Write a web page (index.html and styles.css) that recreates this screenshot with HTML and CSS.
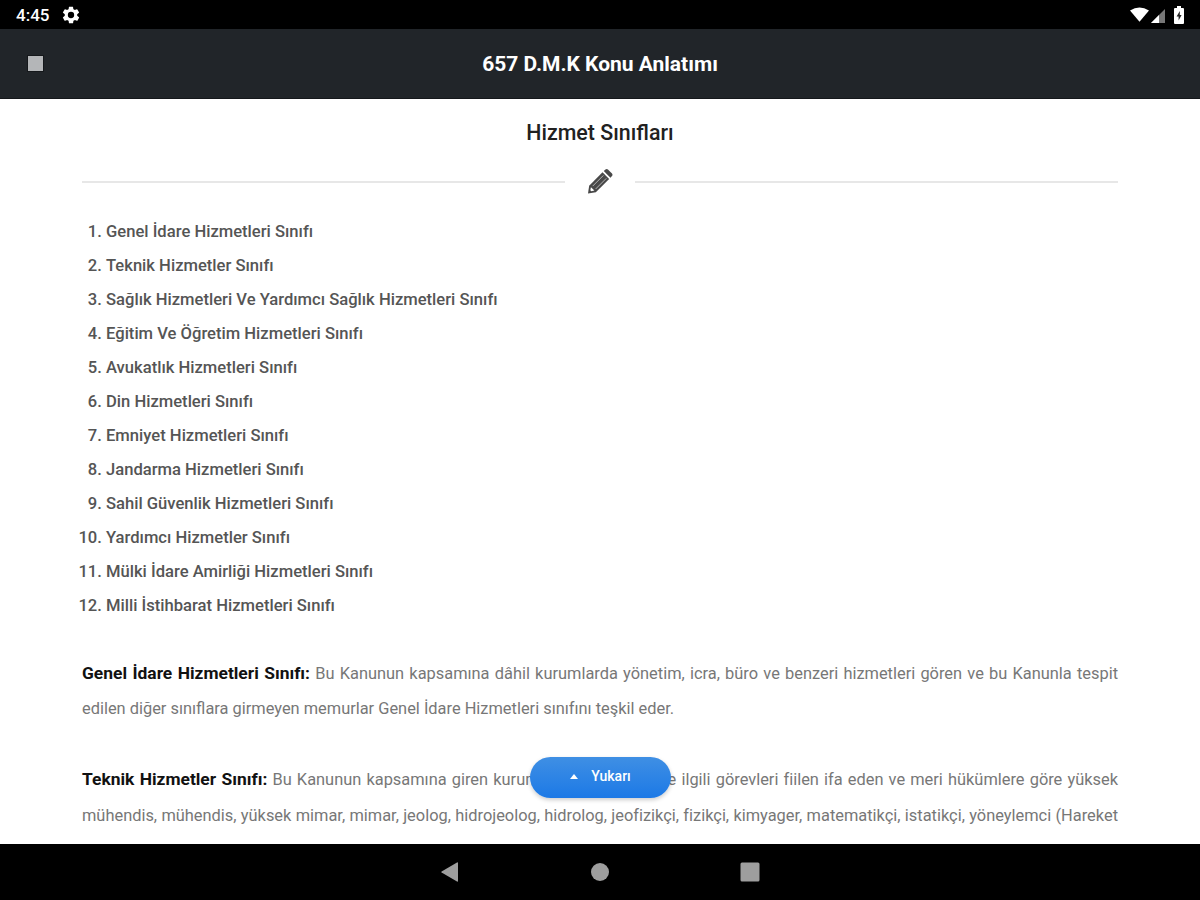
FILE: index.html
```html
<!DOCTYPE html>
<html lang="tr">
<head>
    <meta charset="UTF-8">
    <meta name="viewport" content="width=device-width, initial-scale=1.0">
    <title>657 D.M.K Konu Anlatımı</title>
    <link rel="stylesheet" href="styles.css">
</head>
<body>
    <div class="screen">
        <!-- Status bar -->
        <div class="status-bar">
            <div class="status-left">
                <span class="clock">4:45</span>
                <svg class="gear" viewBox="0 0 24 24"><path fill="#fff" fill-rule="evenodd" d="M19.4 13c.04-.3.06-.65.06-1s-.02-.7-.06-1l2.1-1.65a.5.5 0 0 0 .12-.64l-2-3.46a.5.5 0 0 0-.6-.22l-2.5 1a7.3 7.3 0 0 0-1.7-.98l-.38-2.65A.5.5 0 0 0 14 2h-4a.5.5 0 0 0-.5.42l-.37 2.65c-.6.24-1.17.58-1.7.98l-2.48-1a.5.5 0 0 0-.6.22l-2 3.46a.5.5 0 0 0 .12.64L4.57 11a8 8 0 0 0 0 2l-2.1 1.65a.5.5 0 0 0-.12.64l2 3.46c.12.22.38.3.6.22l2.5-1c.52.4 1.08.74 1.7.98l.37 2.65c.04.24.25.4.5.4h4c.24 0 .45-.16.5-.4l.36-2.65c.62-.24 1.18-.58 1.7-.98l2.5 1c.22.08.48 0 .6-.22l2-3.46a.5.5 0 0 0-.12-.64zM12 15.8a3.8 3.8 0 1 1 0-7.6 3.8 3.8 0 0 1 0 7.6z"/></svg>
            </div>
            <div class="status-right">
                <svg class="wifi" viewBox="0 0 20 15"><path fill="#fff" d="M0 3.2Q10-3.2 20 3.2L10 15z"/></svg>
                <svg class="signal" viewBox="0 0 14 14"><path fill="#777" d="M14 0v14H0z"/><path fill="#fff" d="M8 6v8H0z"/></svg>
                <svg class="battery" viewBox="0 0 10 18"><path fill="#fff" d="M3 0h4v2h2q1 0 1 1v14q0 1-1 1H1q-1 0-1-1V3q0-1 1-1h2z"/><path fill="#222" d="M5.8 5L2.6 10.6h2v4L7.6 9H5.8z"/></svg>
            </div>
        </div>

        <!-- Navbar -->
        <div class="navbar">
            <span class="menu-btn"></span>
            <h1>657 D.M.K Konu Anlatımı</h1>
        </div>

        <div class="content">
            <h2>Hizmet Sınıfları</h2>

            <div class="divider">
                <svg class="pencil" viewBox="0 0 24 24">
                    <path fill="#484848" d="M.5 23.5L1.6 16L14.4 3.2 20.8 9.6 8 22.4z"/>
                    <path fill="#484848" d="M15.6 2L17.2.5q1.2-1 2.4 0l3.9 3.9q1 1.2 0 2.4L22 8.4z"/>
                    <path fill="none" stroke="#bbb" stroke-width=".9" d="M5 16.4L15.2 6.2M7.8 19.2L18 9"/>
                    <path fill="#fff" d="M3.3 17.4L6.6 20.7 3.7 21.3 2.7 20.3z"/>
                </svg>
            </div>

            <ol class="class-list">
                <li>Genel İdare Hizmetleri Sınıfı</li>
                <li>Teknik Hizmetler Sınıfı</li>
                <li>Sağlık Hizmetleri Ve Yardımcı Sağlık Hizmetleri Sınıfı</li>
                <li>Eğitim Ve Öğretim Hizmetleri Sınıfı</li>
                <li>Avukatlık Hizmetleri Sınıfı</li>
                <li>Din Hizmetleri Sınıfı</li>
                <li>Emniyet Hizmetleri Sınıfı</li>
                <li>Jandarma Hizmetleri Sınıfı</li>
                <li>Sahil Güvenlik Hizmetleri Sınıfı</li>
                <li>Yardımcı Hizmetler Sınıfı</li>
                <li>Mülki İdare Amirliği Hizmetleri Sınıfı</li>
                <li>Milli İstihbarat Hizmetleri Sınıfı</li>
            </ol>

            <p><b>Genel İdare Hizmetleri Sınıfı:</b> Bu Kanunun kapsamına dâhil kurumlarda yönetim, icra, büro ve benzeri hizmetleri gören ve bu Kanunla tespit edilen diğer sınıflara girmeyen memurlar Genel İdare Hizmetleri sınıfını teşkil eder.</p>

            <p class="full"><b>Teknik Hizmetler Sınıfı:</b> Bu Kanunun kapsamına giren kurumlarda meslekleriyle ilgili görevleri fiilen ifa eden ve meri hükümlere göre yüksek mühendis, mühendis, yüksek mimar, mimar, jeolog, hidrojeolog, hidrolog, jeofizikçi, fizikçi, kimyager, matematikçi, istatikçi, yöneylemci (Hareket</p>

            <button class="up-btn"><span class="caret"></span>Yukarı</button>
        </div>

        <!-- Android navigation -->
        <div class="nav-bar">
            <svg viewBox="0 0 20 20"><path fill="#9e9e9e" d="M18 1v18q0 1-1 .5L1.6 10.6q-.8-.6 0-1.2L17 .5q1-.5 1 .5z"/></svg>
            <svg viewBox="0 0 20 20"><circle cx="10" cy="10" r="9" fill="#9e9e9e"/></svg>
            <svg viewBox="0 0 20 20"><rect x=".5" y=".5" width="19" height="19" rx="1.5" fill="#9e9e9e"/></svg>
        </div>
    </div>
</body>
</html>
```
FILE: styles.css
```css
* {
    margin: 0;
    padding: 0;
    box-sizing: border-box;
}

body {
    font-family: Roboto, "Liberation Sans", sans-serif;
    background: #fff;
    color: #777;
    height: 100vh;
    overflow: hidden;
}

.screen {
    height: 900px;
    display: flex;
    flex-direction: column;
}

.status-bar {
    height: 29px;
    flex: none;
    background: #000;
    color: #fff;
    display: flex;
    align-items: center;
    justify-content: space-between;
    padding: 0 16px;
}

.status-left,
.status-right {
    display: flex;
    align-items: center;
}

.clock {
    font-size: 17px;
    font-weight: 500;
    line-height: 29px;
    padding-top: 2px;
}

.gear {
    width: 20px;
    height: 20px;
    margin-left: 12px;
}

.wifi {
    width: 19px;
    height: 15px;
}

.signal {
    width: 14px;
    height: 14px;
    margin: 2px 9px 0 2px;
}

.battery {
    width: 10px;
    height: 18px;
}

.navbar {
    height: 70px;
    flex: none;
    background: #212529;
    border-bottom: 1px solid #15181b;
    display: flex;
    align-items: center;
    padding: 0 28px;
}

.menu-btn {
    width: 15px;
    height: 15px;
    background: #b4b6b8;
    box-shadow: 0 0 0 1px #15181b;
}

.navbar h1 {
    flex: 1;
    margin-right: 15px;
    text-align: center;
    color: #fff;
    font-size: 21px;
    font-weight: 700;
}

.content {
    flex: 1;
    min-height: 0;
    overflow: hidden;
    position: relative;
    padding: 18px 82px 0;
}

.content h2 {
    text-align: center;
    color: #212121;
    font-size: 21.4px;
    font-weight: 500;
    line-height: 32px;
}

.divider {
    display: flex;
    align-items: center;
    gap: 22px;
    height: 25px;
    margin-top: 20px;
}

.divider::before,
.divider::after {
    content: '';
    flex: 1;
    height: 2px;
    background: #e7e7e7;
}

.pencil {
    width: 26px;
    height: 25px;
}

.class-list {
    list-style-position: outside;
    padding-left: 24px;
    margin: 21px 0 32.5px;
    color: #555;
    font-size: 16.6px;
    font-weight: 500;
    line-height: 34px;
}

.content p {
    font-size: 16.4px;
    line-height: 35.5px;
    text-align: justify;
    margin-bottom: 35.5px;
}

.content p.full {
    text-align-last: justify;
}

.content p b {
    color: #111;
    font-size: 17.4px;
    font-weight: 700;
    line-height: 1;
}

.up-btn {
    position: absolute;
    left: 530px;
    top: 658px;
    width: 141px;
    height: 41px;
    border: none;
    border-radius: 21px;
    background: linear-gradient(#3f8fe4, #1c79e6);
    box-shadow: 0 2px 4px rgba(0, 0, 0, 0.2);
    color: #fff;
    font-family: inherit;
    font-size: 14px;
    font-weight: 500;
    padding: 0 0 3px;
    display: flex;
    align-items: center;
    justify-content: center;
    gap: 13px;
}

.caret {
    border: 4px solid transparent;
    border-top: none;
    border-bottom: 5px solid #fff;
}

.nav-bar {
    height: 56px;
    flex: none;
    background: #000;
    display: flex;
    justify-content: center;
    align-items: center;
    gap: 130px;
}

.nav-bar svg {
    width: 20px;
    height: 20px;
}
```
